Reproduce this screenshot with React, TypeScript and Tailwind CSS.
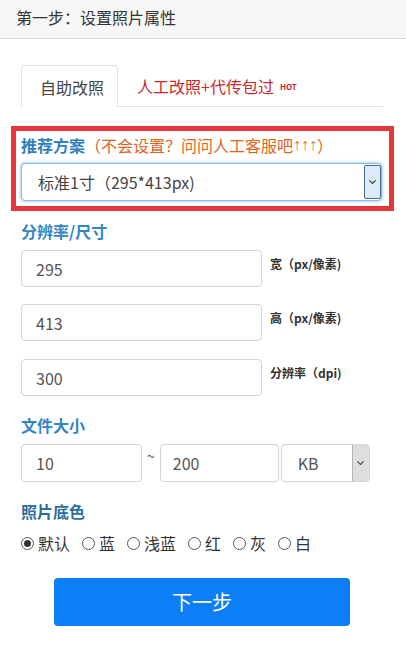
import React from "react";

const font = { fontFamily: '"Noto Sans CJK SC", "Open Sans", sans-serif' };

function Radio({ label, checked }: { label: string; checked?: boolean }) {
  return (
    <label className="flex items-center">
      <span className="mr-1 flex h-[13px] w-[13px] items-center justify-center rounded-full border border-[#555] bg-white">
        {checked && <span className="h-[7px] w-[7px] rounded-full bg-[#333]" />}
      </span>
      <span className="text-[16px] leading-6 text-[#333]">{label}</span>
    </label>
  );
}

function Chevron({ className }: { className?: string }) {
  return (
    <svg viewBox="0 0 10 6" className={className} fill="none" stroke="currentColor" strokeWidth="1.2">
      <path d="M1.5 1.2 5 4.6 8.5 1.2" />
    </svg>
  );
}

function SizeRow({ value, label, className }: { value: string; label: string; className?: string }) {
  return (
    <div className={`flex items-start ${className ?? ""}`}>
      <div className="flex h-[37px] w-[241px] items-center rounded border border-[#d4d4d4] bg-white pl-[14px] text-[16px] text-[#555]">
        {value}
      </div>
      <span className="ml-2 mt-[6px] text-[12px] font-bold leading-4 text-[#333]">{label}</span>
    </div>
  );
}

export default function App() {
  return (
    <div className="min-h-[650px] w-[406px] bg-white" style={font}>
      <div className="flex h-[39px] items-center border-b border-[#dcdcdc] bg-[#f7f7f7] pb-[4px] pl-4">
        <span className="text-[16px] text-[#333]">第一步：设置照片属性</span>
      </div>

      <div className="pl-[21px] pr-[23px]">
        {/* tabs */}
        <div className="mt-[26px] flex items-end border-b border-[#e2e2e2]">
          <div className="-mb-px flex h-[42px] w-[97px] items-center rounded-t border border-b-0 border-[#e2e2e2] bg-white pl-[18px] text-[16px] text-[#444]">
            自助改照
          </div>
          <div className="ml-[19px] flex h-[41px] items-center text-[16px] text-[#c9282d]">
            人工改照+代传包过
            <span className="ml-[6px] mt-[2px] text-[8px] font-bold text-[#c9282d]">HOT</span>
          </div>
        </div>

        {/* recommended */}
        <div className="-ml-[10px] -mr-[11px] mt-[19px] border-[5px] border-[#e5373a] pb-[5px] pl-[5px] pr-[7px] pt-[2px]">
          <div className="flex h-6 items-center text-[16px] leading-6">
            <span className="font-bold text-[#2f7fc1]">推荐方案</span>
            <span className="text-[#e0641f]">（不会设置？问问人工客服吧</span>
            <span className="text-[#e0641f]" style={{ fontFamily: '"Liberation Sans", sans-serif' }}>
              ↑↑↑
            </span>
            <span className="text-[#e0641f]">）</span>
          </div>
          <div className="mt-[6px] flex h-[38px] items-center justify-between rounded border border-[#8cbbea] bg-white pl-4 pr-0 shadow-[0_0_3px_1px_rgba(102,175,233,0.5)]">
            <span className="text-[16px] text-[#444]">标准1寸（295*413px)</span>
            <span className="flex h-[34px] w-[17px] items-center justify-center rounded-[2px] border border-[#4a6d8f] bg-[#dcebf8] text-[#333]">
              <Chevron className="h-[6px] w-[9px]" />
            </span>
          </div>
        </div>

        {/* resolution */}
        <div className="mt-[8px] text-[16px] font-bold leading-6 text-[#3385c6]">分辨率/尺寸</div>
        <SizeRow className="mt-[7px]" value="295" label="宽（px/像素)" />
        <SizeRow className="mt-[17px]" value="413" label="高（px/像素)" />
        <SizeRow className="mt-[18px]" value="300" label="分辨率（dpi)" />

        {/* file size */}
        <div className="mt-[17px] text-[16px] font-bold leading-6 text-[#3385c6]">文件大小</div>
        <div className="mt-[7px] flex items-start">
          <div className="flex h-[38px] w-[121px] items-center rounded border border-[#d4d4d4] pl-[14px] text-[16px] text-[#555]">
            10
          </div>
          <span className="mx-[5px] mt-[2px] text-[14px] leading-5 text-[#555]">~</span>
          <div className="flex h-[38px] w-[119px] items-center rounded border border-[#d4d4d4] pl-[12px] text-[16px] text-[#555]">
            200
          </div>
          <div className="ml-[2px] flex h-[38px] w-[89px] items-center justify-between rounded border border-[#d4d4d4] pl-[16px]">
            <span className="text-[16px] text-[#555]">KB</span>
            <span className="flex h-[36px] w-[17px] items-center justify-center rounded-r-[3px] border-l border-[#b5b5b5] bg-[#dedede] text-[#444]">
              <Chevron className="h-[6px] w-[9px]" />
            </span>
          </div>
        </div>

        {/* background color */}
        <div className="mt-[17px] text-[16px] font-bold leading-6 text-[#2c6f9f]">照片底色</div>
        <div className="mt-[8px] flex items-center gap-3">
          <Radio label="默认" checked />
          <Radio label="蓝" />
          <Radio label="浅蓝" />
          <Radio label="红" />
          <Radio label="灰" />
          <Radio label="白" />
        </div>

        <button className="ml-[33px] mt-[23px] flex h-[48px] w-[296px] items-center justify-center rounded bg-[#0c7ef6] text-[20px] text-white">
          下一步
        </button>
      </div>
    </div>
  );
}
